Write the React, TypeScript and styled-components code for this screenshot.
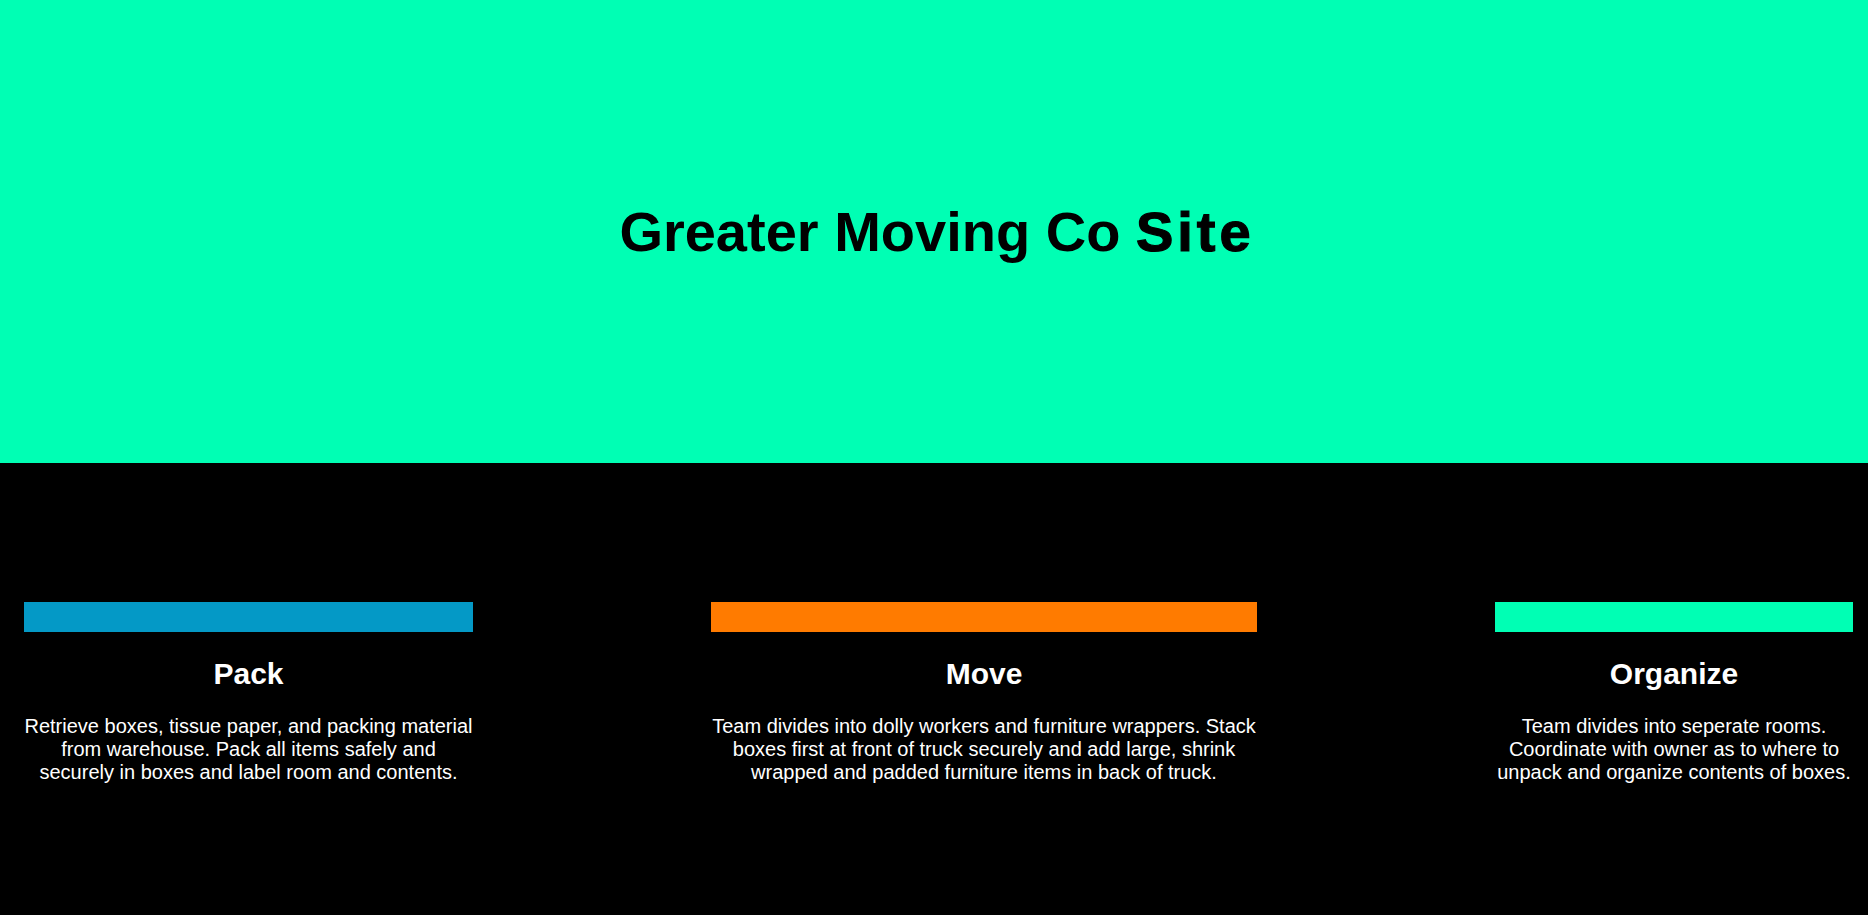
import styled, { createGlobalStyle } from "styled-components";

const GlobalStyle = createGlobalStyle`
    html, body {
        margin: 0;
        padding: 0;
        background: #000;
    }
    body {
        font-family: "Liberation Sans", Arial, sans-serif;
        font-size: 20px;
    }
`;

const Page = styled.div`
    display: flex;
    flex-direction: column;
    min-height: 915px;
    background: #000;
`;

const Hero = styled.header`
    display: flex;
    align-items: center;
    justify-content: center;
    height: 463px;
    background: #00ffb4;
`;

const Title = styled.h1`
    margin: 0 0 0 6px;
    font-family: "Liberation Sans", Arial, sans-serif;
    font-size: 56px;
    font-weight: 700;
    color: #000;
`;

const TitleAccent = styled.span`
    letter-spacing: 4px;
    -webkit-text-stroke: 1.2px #000;
`;

const Services = styled.section`
    display: flex;
    align-items: flex-start;
    gap: 238px;
    padding: 139px 0 0 24px;
`;

const Card = styled.article<{ $width: number }>`
    display: flex;
    flex-direction: column;
    width: ${(p) => p.$width}px;
    color: #fff;
    text-align: center;
`;

const Stripe = styled.div<{ $color: string }>`
    height: 30px;
    background: ${(p) => p.$color};
`;

const CardTitle = styled.h2`
    margin: 25px 0 0;
    font-size: 30px;
    font-weight: 700;
`;

const CardText = styled.p`
    margin: 24px 0 0;
    font-size: 20px;
    line-height: 23px;
`;

const services = [
    {
        title: "Pack",
        color: "#0499c6",
        width: 449,
        text: "Retrieve boxes, tissue paper, and packing material from warehouse. Pack all items safely and securely in boxes and label room and contents.",
    },
    {
        title: "Move",
        color: "#ff7b00",
        width: 546,
        text: "Team divides into dolly workers and furniture wrappers. Stack boxes first at front of truck securely and add large, shrink wrapped and padded furniture items in back of truck.",
    },
    {
        title: "Organize",
        color: "#00ffb4",
        width: 358,
        text: "Team divides into seperate rooms. Coordinate with owner as to where to unpack and organize contents of boxes.",
    },
];

export default function App() {
    return (
        <>
            <GlobalStyle />
            <Page>
                <Hero>
                    <Title>
                        Greater Moving Co <TitleAccent>Site</TitleAccent>
                    </Title>
                </Hero>
                <Services>
                    {services.map((s) => (
                        <Card key={s.title} $width={s.width}>
                            <Stripe $color={s.color} />
                            <CardTitle>{s.title}</CardTitle>
                            <CardText>{s.text}</CardText>
                        </Card>
                    ))}
                </Services>
            </Page>
        </>
    );
}
